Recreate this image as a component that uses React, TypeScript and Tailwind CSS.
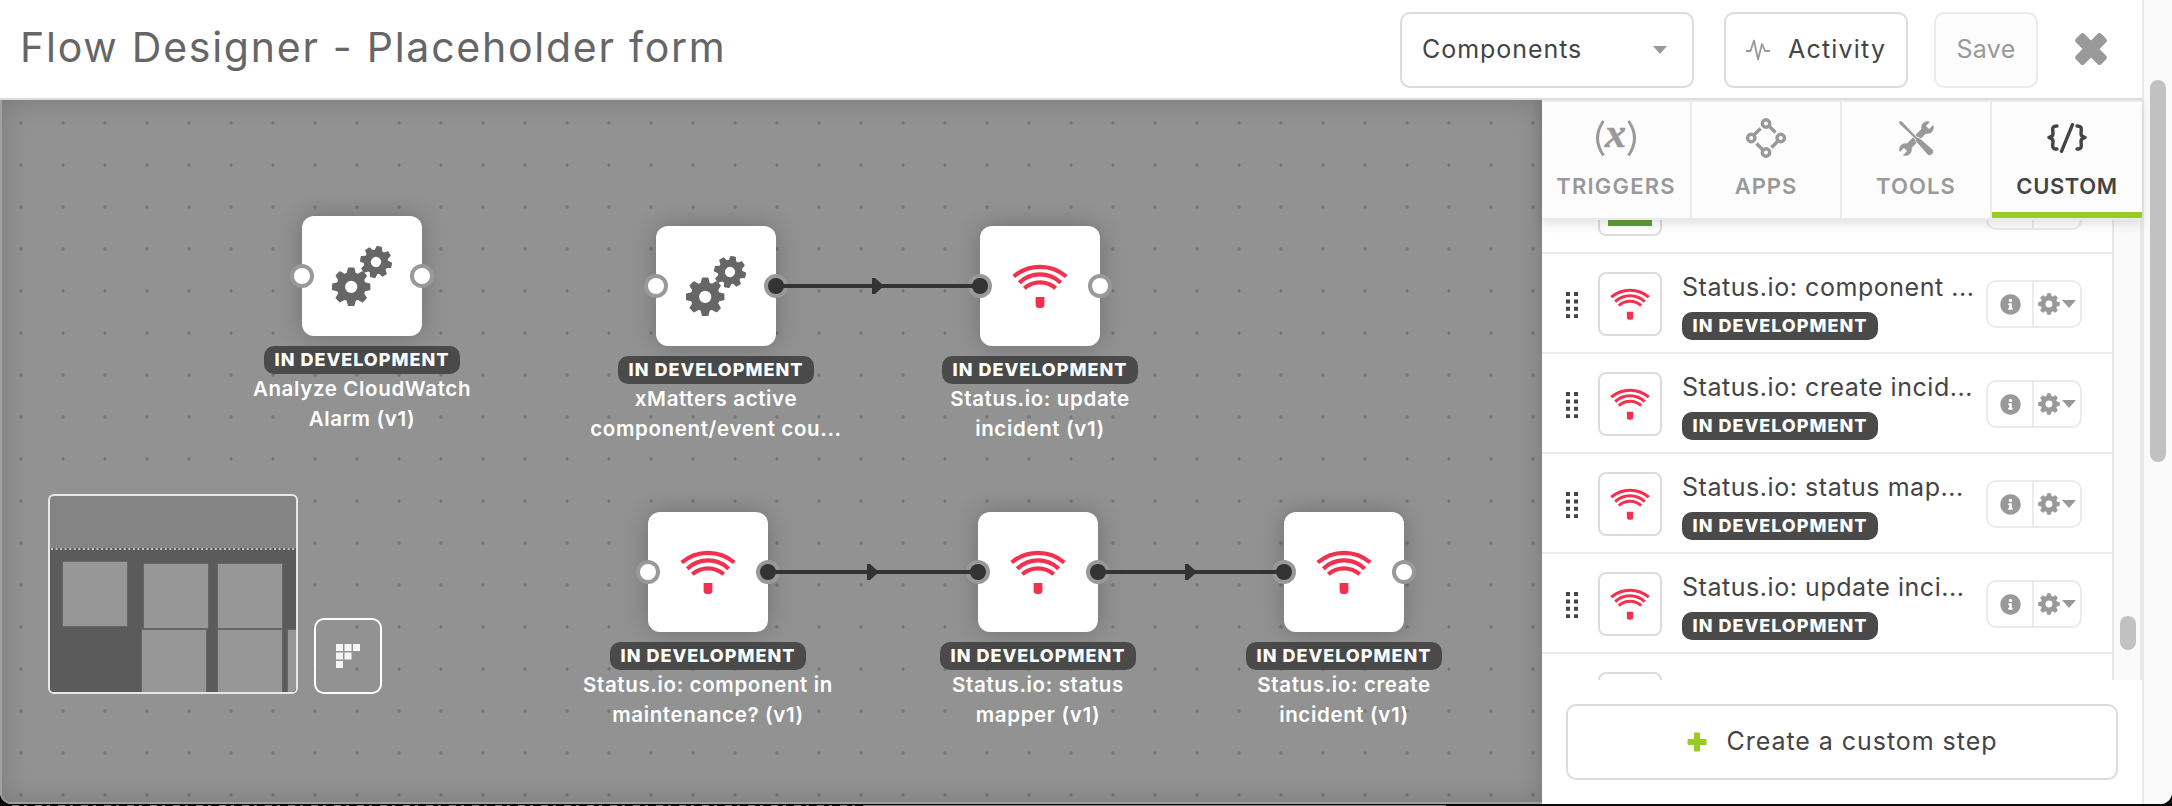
import React from "react";
import { FaInfoCircle } from "react-icons/fa";

const NODES = [
  { x: 302, y: 216, kind: "gears", lines: ["Analyze CloudWatch", "Alarm (v1)"], inp: false, out: false },
  { x: 656, y: 226, kind: "gears", lines: ["xMatters active", "component/event cou..."], inp: false, out: true },
  { x: 980, y: 226, kind: "wifi", lines: ["Status.io: update", "incident (v1)"], inp: true, out: false },
  { x: 648, y: 512, kind: "wifi", lines: ["Status.io: component in", "maintenance? (v1)"], inp: false, out: true },
  { x: 978, y: 512, kind: "wifi", lines: ["Status.io: status", "mapper (v1)"], inp: true, out: true },
  { x: 1284, y: 512, kind: "wifi", lines: ["Status.io: create", "incident (v1)"], inp: true, out: false },
];

const LINKS = [
  { x1: 776, x2: 980, y: 286 },
  { x1: 768, x2: 978, y: 572 },
  { x1: 1098, x2: 1284, y: 572 },
];

const STEPS = ["Status.io: component ...", "Status.io: create incid...", "Status.io: status map...", "Status.io: update inci..."];

function Wifi({ className }: { className: string }) {
  return (
    <svg viewBox="0 0 56 44" className={className} fill="none" stroke="#f5304f" strokeWidth="4.2">
      <path d="M1.700 12.500A40.500 40.500 0 0 1 54.300 12.500" />
      <path d="M7.300 18.700A30 30 0 0 1 48.700 18.700" />
      <path d="M12.300 24.300A23.500 23.500 0 0 1 43.700 24.300" />
      <path d="M23.600 33h8.800v7.500a3.500 3.500 0 0 1-3.500 3.500h-1.800a3.500 3.500 0 0 1-3.500-3.500z" fill="#f5304f" stroke="none" />
    </svg>
  );
}

function Cog({ cx, cy, r, rot }: { cx: number; cy: number; r: number; rot: number }) {
  return (
    <g transform={`translate(${cx} ${cy}) rotate(${rot}) scale(${r / 20})`}>
      {[0, 45, 90, 135, 180, 225, 270, 315].map((a) => (
        <path key={a} d="M-4.500 -12L-2.700 -19.200H2.700L4.500 -12Z" transform={`rotate(${a})`} strokeWidth="1.6" stroke="currentColor" strokeLinejoin="round" />
      ))}
      <path fillRule="evenodd" d="M0-15.200a15.200 15.200 0 1 0 0 30.400a15.200 15.200 0 1 0 0-30.400ZM0-6.400a6.400 6.400 0 1 1 0 12.800a6.400 6.400 0 1 1 0-12.800Z" />
    </g>
  );
}

function Gears() {
  return (
    <svg viewBox="0 0 60 60" className="size-[60px] text-[#666]" fill="currentColor">
      <Cog cx={19.200} cy={40.800} r={19.200} rot={0} />
      <Cog cx={44} cy={16} r={16} rot={12} />
    </svg>
  );
}

function Badge() {
  return (
    <div className="flex h-7 w-[196px] items-center justify-center rounded-[10px] bg-[#4a4a4a] text-[18px] leading-none font-extrabold tracking-[1px] whitespace-nowrap text-white">
      IN DEVELOPMENT
    </div>
  );
}

function Port({ on, side }: { on: boolean; side: "l" | "r" }) {
  return (
    <span className={`absolute top-12 flex size-6 items-center justify-center rounded-full bg-[#999] ${side === "l" ? "-left-3" : "-right-3"}`}>
      <span className={`size-4 rounded-full ${on ? "bg-[#333]" : "bg-white"}`} />
    </span>
  );
}

function Node({ n }: { n: (typeof NODES)[number] }) {
  return (
    <div className="absolute flex w-[280px] flex-col items-center" style={{ left: n.x - 80, top: n.y - 100 }}>
      <div className="relative flex size-[120px] items-center justify-center rounded-xl bg-white shadow-[0_0_26px_rgba(0,0,0,0.24)]">
        {n.kind === "gears" ? <Gears /> : <Wifi className="h-11 w-14" />}
        <Port on={n.inp} side="l" />
        <Port on={n.out} side="r" />
      </div>
      <div className="mt-2.5">
        <Badge />
      </div>
      {n.lines.map((l) => (
        <div key={l} className="h-[30px] text-[20.5px] leading-[30px] font-semibold tracking-[0.64px] whitespace-nowrap text-white">
          {l}
        </div>
      ))}
    </div>
  );
}

const MAP_RECTS = [
  "left-[13px] top-[66px] w-[64px] h-[64px]",
  "left-[94px] top-[68px] w-[64px] h-[64px]",
  "left-[168px] top-[68px] w-[64px] h-[64px]",
  "left-[92px] top-[134px] w-[64px] h-[62px]",
  "left-[168px] top-[134px] w-[64px] h-[62px]",
  "left-[238px] top-[134px] w-[8px] h-[62px]",
];

function Canvas() {
  return (
    <main className="relative w-[1542px] overflow-hidden rounded-bl-[10px] border-b-2 border-l-2 border-[#a0a0a0] bg-[#929292]">
      <svg className="absolute inset-0 h-full w-full">
        <defs>
          <pattern id="dots" width="42" height="42" patternUnits="userSpaceOnUse" x="-2" y="2">
            <circle cx="21" cy="21" r="1.700" fill="#757575" />
          </pattern>
        </defs>
        <rect width="100%" height="100%" fill="url(#dots)" />
      </svg>
      <div className="absolute inset-0 shadow-[inset_0_0_28px_rgba(0,0,0,0.18)]" />
      <div className="absolute top-0 -left-0.5 h-full w-full">
        {NODES.map((n) => (
          <Node key={n.x + "-" + n.y} n={n} />
        ))}
        <svg className="absolute inset-0 h-full w-full" fill="#333">
          {LINKS.map((l) => {
            const m = (l.x1 + l.x2) / 2 - 6;
            const y = l.y - 100;
            return (
              <g key={l.x1}>
                <rect x={l.x1} y={y - 2} width={l.x2 - l.x1} height="4" />
                <path d={`M${m} ${y - 8}h3l9 8l-9 8h-3z`} />
              </g>
            );
          })}
        </svg>
        <div className="absolute top-[394px] left-12 h-[200px] w-[250px] overflow-hidden rounded-md border-2 border-[#e8e8e8] bg-[#848484]">
          <div className="absolute inset-x-0 top-[52px] bottom-0 bg-[#5b5b5b]" />
          <svg className="absolute top-[51px] left-0 h-1 w-full">
            <path d="M1 2H246" stroke="#c4c4c4" strokeWidth="2" strokeDasharray="2 2.55" />
          </svg>
          {MAP_RECTS.map((r) => (
            <div key={r} className={`absolute bg-[#979797] shadow-[0_0_0_1px_#666] ${r}`} />
          ))}
        </div>
        <button className="absolute top-[518px] left-[314px] flex h-[76px] w-[68px] items-center justify-center rounded-[10px] border-2 border-white">
          <svg viewBox="0 0 24 24" className="size-6" fill="#f5f5f5">
            <path d="M0 0h7v7H0zM8.500 0h7v7h-7zM17 0h7v7h-7zM0 8.500h7v7H0zM8.500 8.500h7v7h-7zM0 17h7v7H0z" />
          </svg>
        </button>
      </div>
    </main>
  );
}

function Tab({ label, ls, active, children }: { label: string; ls: string; active?: boolean; children: React.ReactNode }) {
  return (
    <div className={`flex w-[150px] flex-col items-center bg-[#fcfcfc] ${active ? "text-[#444] shadow-[inset_0_-6px_0_#99cc22]" : "border-r-2 border-[#ebebeb] text-[#999]"}`}>
      <div className="flex h-[68px] items-center pt-1">{children}</div>
      <div className={`text-[22px] leading-8 font-semibold whitespace-nowrap ${ls}`}>{label}</div>
    </div>
  );
}

function Actions() {
  return (
    <div className="flex h-12 w-24 rounded-[10px] border-2 border-[#ebebeb] text-[#999]">
      <div className="flex w-[46px] items-center justify-center border-r-2 border-[#ebebeb]">
        <FaInfoCircle size={21} />
      </div>
      <div className="flex flex-1 items-center justify-center gap-0.5">
        <svg viewBox="0 0 22 22" className="size-[22px]" fill="currentColor">
          <Cog cx={11} cy={11} r={10.800} rot={0} />
        </svg>
        <svg viewBox="0 0 14 8" className="h-2 w-3.5" fill="#999">
          <path d="M0 0h14L7 8z" />
        </svg>
      </div>
    </div>
  );
}

function Step({ label }: { label: string }) {
  return (
    <div className="flex h-[100px] shrink-0 border-b-2 border-[#ebebeb] pt-[18px] pl-6">
      <svg viewBox="0 0 12 26" className="mt-5 h-[26px] w-3" fill="#444">
        <path d="M0 0h4v4H0zM8 0h4v4H8zM0 7.400h4v4H0zM8 7.400h4v4H8zM0 14.800h4v4H0zM8 14.800h4v4H8zM0 22.200h4v4H0zM8 22.200h4v4H8z" />
      </svg>
      <div className="ml-5 flex size-16 items-center justify-center rounded-lg border-2 border-[#dcdcdc]">
        <Wifi className="h-8 w-10" />
      </div>
      <div className="ml-5 w-[304px]">
        <div className="h-10 text-[25px] leading-[31px] tracking-[0.55px] whitespace-nowrap text-[#444]">{label}</div>
        <Badge />
      </div>
      <div className="mt-2">
        <Actions />
      </div>
    </div>
  );
}

function Sidebar() {
  return (
    <aside className="relative flex w-[600px] flex-col bg-white">
      <div className="relative z-10 flex h-[120px] border-y-2 border-[#ebebeb] shadow-[0_4px_10px_rgba(0,0,0,0.12)]">
        <Tab label="TRIGGERS" ls="tracking-[1.2px]">
          <svg viewBox="-2 -16 46 68" className="h-[68px] w-[46px]" fill="none" stroke="currentColor" strokeWidth="3">
            <path d="M8.500 1Q-3.500 18 8.500 35.500M33.500 1Q45.500 18 33.500 35.500" />
            <text x="20.500" y="27" textAnchor="middle" fill="currentColor" stroke="currentColor" strokeWidth="0.6" className="font-['Liberation_Serif',serif] text-[42px] font-bold italic">x</text>
          </svg>
        </Tab>
        <Tab label="APPS" ls="tracking-[1px]">
          <svg viewBox="0 0 40 40" className="size-10" fill="none" stroke="currentColor" strokeWidth="3.4">
            <circle cx="20" cy="5.500" r="3.700" />
            <circle cx="20" cy="34.500" r="3.700" />
            <circle cx="5.300" cy="20" r="3.700" />
            <circle cx="34.700" cy="20" r="3.700" />
            <path d="M14.500 10.500L8.500 16.500M23.500 8.500L29.500 14.500M10.500 25.500L16.500 31.500M31.500 23.500L25.500 29.500" />
          </svg>
        </Tab>
        <Tab label="TOOLS" ls="tracking-[1.1px]">
          <svg viewBox="0 0 35 35" className="size-[35px]" fill="currentColor">
            <circle cx="28.500" cy="6.500" r="6.300" />
            <circle cx="6.500" cy="28.500" r="6.300" />
            <path d="M8 27L27 8" stroke="currentColor" strokeWidth="6.500" />
            <path d="M28.500 6.500L36 -1M6.500 28.500L-1 36" stroke="#fcfcfc" strokeWidth="4.500" />
            <path d="M1 0L3 .800L18.200 16.800L20.500 17.200L33.700 28.800A3.600 3.600 0 0 1 28.800 33.700L17.200 20.500L16.800 18.200L.800 3L0 1Z" stroke="#fcfcfc" strokeWidth="1.400" paintOrder="stroke" />
          </svg>
        </Tab>
        <Tab label="CUSTOM" ls="tracking-[0.6px]" active>
          <svg viewBox="0 0 40 30" className="h-[30px] w-10" fill="none" stroke="currentColor" strokeWidth="3.400" strokeLinecap="round" strokeLinejoin="round">
            <path d="M10 3C4 3 6 7 6 10.500C6 13 4.500 14 2 14.500C4.500 15 6 16 6 18.500C6 22 4 26 10 26M30 3C36 3 34 7 34 10.500C34 13 35.500 14 38 14.500C35.500 15 34 16 34 18.500C34 22 36 26 30 26M25.500 1.700L14.500 28.300" />
          </svg>
        </Tab>
      </div>
      <div className="flex h-[460px] overflow-hidden">
        <div className="w-[570px]">
          <div className="flex h-[34px] items-start border-b-2 border-[#ebebeb] pl-14">
            <div className="flex h-4 w-16 justify-center rounded-b-lg border-2 border-t-0 border-[#dcdcdc]">
              <div className="h-1.5 w-11 bg-[#5f9e3a]" />
            </div>
            <div className="ml-[324px] flex h-2.5 w-24 rounded-b-[10px] border-2 border-t-0 border-[#ebebeb]">
              <div className="w-[46px] border-r-2 border-[#ebebeb]" />
            </div>
          </div>
          {STEPS.map((s) => (
            <Step key={s} label={s} />
          ))}
          <div className="pt-[18px] pl-14">
            <div className="size-16 rounded-lg border-2 border-[#dcdcdc]" />
          </div>
        </div>
        <div className="flex w-[30px] flex-col items-center border-x-2 border-[#e8e8e8] bg-[#fafafa] pt-[396px] pl-0.5">
          <div className="h-[34px] w-4 rounded-full bg-[#c1c1c1]" />
        </div>
      </div>
      <button className="mt-6 ml-6 flex h-[76px] w-[552px] items-center justify-center gap-5 rounded-[10px] border-2 border-[#dcdcdc] text-[25px] tracking-[0.95px] text-[#444]">
        <svg viewBox="0 0 20 20" className="size-5" fill="#99cc22">
          <rect x="7" y="0.500" width="6" height="19" rx="1" />
          <rect x="0.500" y="7" width="19" height="6" rx="1" />
        </svg>
        Create a custom step
      </button>
    </aside>
  );
}

export default function App() {
  return (
    <div className="relative h-[806px] w-[2172px] overflow-hidden bg-[#080808] font-['Inter',sans-serif]">
      <div className="absolute bottom-0 left-3 flex h-px w-[1434px]">
        <div className="w-[854px] bg-[repeating-linear-gradient(90deg,#808080_0_7px,#080808_7px_12px,#808080_12px_15px,#080808_15px_23px)]" />
        <div className="flex-1 bg-[#808080]" />
      </div>
      <div className="flex h-[804px] overflow-hidden rounded-b-[12px] bg-white">
        <div className="flex w-[2142px] flex-col">
          <header className="relative z-20 flex h-[100px] shrink-0 items-center border-b-2 border-[#dcdcdc] bg-white pt-0.5 pl-5">
            <h1 className="w-[1380px] pb-1 text-[41px] tracking-[1.75px] whitespace-nowrap text-[#666]">Flow Designer - Placeholder form</h1>
            <div className="flex h-[76px] w-[294px] items-center justify-between rounded-[10px] border-2 border-[#dcdcdc] pr-[25px] pl-5 text-[25px] tracking-[0.95px] text-[#444]">
              Components
              <svg viewBox="0 0 14 8" className="h-2 w-3.5" fill="#999">
                <path d="M0 0h14L7 8z" />
              </svg>
            </div>
            <button className="ml-[30px] flex h-[76px] w-[184px] items-center rounded-[10px] border-2 border-[#dcdcdc] pl-5 text-[25px] tracking-[1.2px] text-[#444]">
              <svg viewBox="0 0 24 22" className="mr-[18px] h-[22px] w-6" fill="none" stroke="#999" strokeWidth="1.800" strokeLinejoin="round">
                <path d="M0 12H4.500L8 1.500L12 20.500L16 5L19 12H24" />
              </svg>
              Activity
            </button>
            <button className="ml-[26px] flex h-[76px] w-[104px] items-center justify-center rounded-[10px] border-2 border-[#ebebeb] bg-[#fcfcfc] text-[25px] tracking-[0.3px] text-[#999]">Save</button>
            <svg viewBox="-17 -17 34 34" className="mb-0.5 ml-9 size-[34px]" fill="#999">
              <rect x="-18" y="-6" width="36" height="12" rx="2.500" transform="rotate(45)" />
              <rect x="-18" y="-6" width="36" height="12" rx="2.500" transform="rotate(-45)" />
            </svg>
          </header>
          <div className="flex flex-1">
            <Canvas />
            <Sidebar />
          </div>
        </div>
        <div className="flex w-[30px] flex-col items-center border-l-2 border-[#e8e8e8] bg-[#fafafa] pt-20">
          <div className="h-[382px] w-4 rounded-full bg-[#c1c1c1]" />
        </div>
      </div>
    </div>
  );
}
